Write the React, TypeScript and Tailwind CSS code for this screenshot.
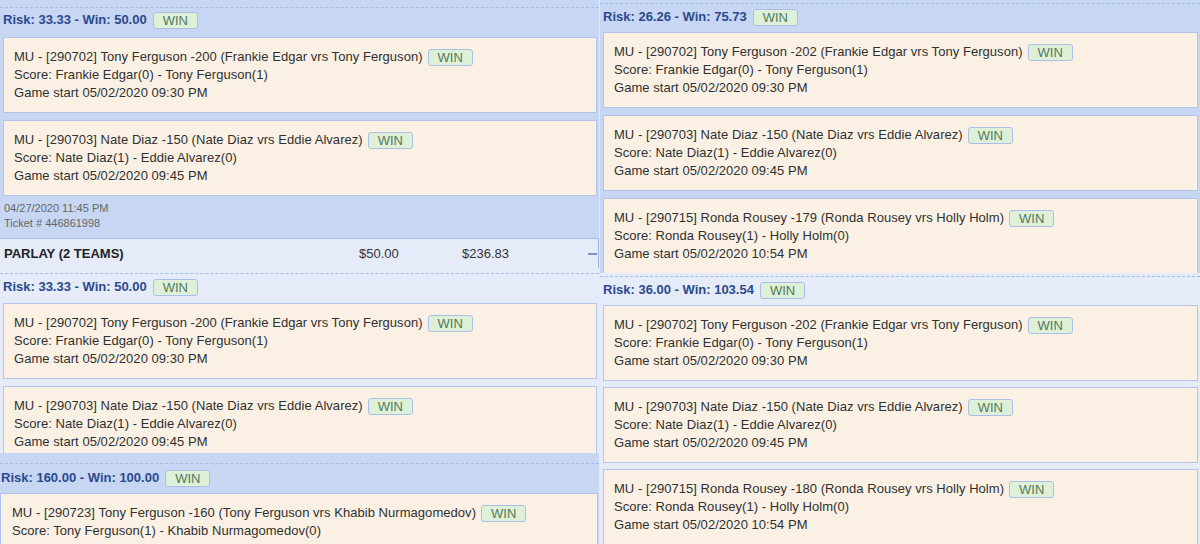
import React from "react";

type LegData = { line: string; score: string; start?: string };

function Badge({ className = "" }: { className?: string }) {
  return (
    <span
      className={
        "inline-flex items-center h-[17px] border border-[#a9bfe8] bg-[#dff0d8] text-[#52795a] rounded-[3px] px-[9px] text-[13px] leading-[15px] font-normal tracking-normal " +
        className
      }
    >
      WIN
    </span>
  );
}

function RiskHeader({ risk, win, className = "" }: { risk: string; win: string; className?: string }) {
  return (
    <div className={"flex items-center h-[18px] text-[13px] leading-[18px] font-bold text-[#2b4a8e] " + className}>
      <span>
        Risk: {risk} - Win: {win}
      </span>
      <Badge className="ml-[6px]" />
    </div>
  );
}

function Leg({ data, className = "" }: { data: LegData; className?: string }) {
  return (
    <div
      className={
        "border border-[#b3c5eb] bg-[#faf1e4] pl-[10px] py-[10px] text-[13px] leading-[18px] text-[#303030] tracking-[0.045px] " +
        className
      }
    >
      <div className="flex items-center h-[18px] whitespace-nowrap">
        <span>{data.line}</span>
        <Badge className="ml-[5px]" />
      </div>
      <div className="whitespace-nowrap">{data.score}</div>
      {data.start && <div className="whitespace-nowrap">{data.start}</div>}
    </div>
  );
}

const ferg200: LegData = {
  line: "MU - [290702] Tony Ferguson -200 (Frankie Edgar vrs Tony Ferguson)",
  score: "Score: Frankie Edgar(0) - Tony Ferguson(1)",
  start: "Game start 05/02/2020 09:30 PM",
};
const ferg202: LegData = {
  line: "MU - [290702] Tony Ferguson -202 (Frankie Edgar vrs Tony Ferguson)",
  score: "Score: Frankie Edgar(0) - Tony Ferguson(1)",
  start: "Game start 05/02/2020 09:30 PM",
};
const diaz: LegData = {
  line: "MU - [290703] Nate Diaz -150 (Nate Diaz vrs Eddie Alvarez)",
  score: "Score: Nate Diaz(1) - Eddie Alvarez(0)",
  start: "Game start 05/02/2020 09:45 PM",
};
const rousey179: LegData = {
  line: "MU - [290715] Ronda Rousey -179 (Ronda Rousey vrs Holly Holm)",
  score: "Score: Ronda Rousey(1) - Holly Holm(0)",
  start: "Game start 05/02/2020 10:54 PM",
};
const rousey180: LegData = {
  line: "MU - [290715] Ronda Rousey -180 (Ronda Rousey vrs Holly Holm)",
  score: "Score: Ronda Rousey(1) - Holly Holm(0)",
  start: "Game start 05/02/2020 10:54 PM",
};
const khabib: LegData = {
  line: "MU - [290723] Tony Ferguson -160 (Tony Ferguson vrs Khabib Nurmagomedov)",
  score: "Score: Tony Ferguson(1) - Khabib Nurmagomedov(0)",
};

function Dashed() {
  return <div className="border-t border-dashed border-[#a6bbe7]" />;
}

export default function App() {
  return (
    <div
      className="w-[1200px] h-[544px] overflow-hidden flex bg-[#c7d6f2]"
      style={{ fontFamily: '"Liberation Sans", Arial, sans-serif' }}
    >
      {/* Left column */}
      <div className="w-[599px] flex flex-col shrink-0">
        <div className="bg-[#c7d6f2] pt-[7px]">
          <Dashed />
          <RiskHeader risk="33.33" win="50.00" className="pl-[3px] mt-[3px] mb-[8px]" />
          <div className="flex flex-col gap-[7px] ml-[3px] mr-[2px]">
            <Leg data={ferg200} />
            <Leg data={diaz} />
          </div>
          <div className="pl-[4px] pt-[5px] pb-[7px] text-[11px] leading-[15px] text-[#666]">
            <div>04/27/2020 11:45 PM</div>
            <div>Ticket # 446861998</div>
          </div>
        </div>
        <div className="bg-[#e5ebf8] border-t border-[#aabfe8] border-r border-r-[#9fb4e0] h-[30px] flex items-center text-[13px] text-[#333]">
          <div className="w-[359px] pl-[4px] font-bold text-[#222]">PARLAY (2 TEAMS)</div>
          <div className="w-[103px]">$50.00</div>
          <div className="flex-1">$236.83</div>
          <div className="w-[9px] h-[2px] bg-[#7b92c8] mr-[1px]" />
        </div>
        <div className="bg-[#e5ebf8] pt-[5px] h-[185px] overflow-hidden">
          <Dashed />
          <RiskHeader risk="33.33" win="50.00" className="pl-[3px] mt-[4px] mb-[7px]" />
          <div className="flex flex-col gap-[7px] ml-[3px] mr-[2px]">
            <Leg data={ferg200} />
            <Leg data={diaz} />
          </div>
        </div>
        <div className="bg-[#c7d6f2] pt-[10px] flex-1 overflow-hidden">
          <Dashed />
          <RiskHeader risk="160.00" win="100.00" className="pl-[1px] mt-[5px] mb-[6px]" />
          <div className="flex flex-col ml-0 mr-[1px]">
            <Leg data={khabib} className="pl-[11px]" />
          </div>
        </div>
      </div>
      <div className="w-[1px] bg-[#e3eaf9] shrink-0" />
      {/* Right column */}
      <div className="w-[600px] flex flex-col shrink-0">
        <div className="bg-[#c7d6f2] pt-[3px] h-[273px] overflow-hidden">
          <Dashed />
          <RiskHeader risk="26.26" win="75.73" className="pl-[3px] mt-[4px] mb-[6px]" />
          <div className="flex flex-col gap-[7px] ml-[3px] mr-[2px]">
            <Leg data={ferg202} />
            <Leg data={diaz} />
            <Leg data={rousey179} />
          </div>
        </div>
        <div className="bg-[#e5ebf8] pt-[3px] flex-1 overflow-hidden">
          <Dashed />
          <RiskHeader risk="36.00" win="103.54" className="pl-[3px] mt-[4px] mb-[6px]" />
          <div className="flex flex-col gap-[6px] ml-[3px] mr-[2px]">
            <Leg data={ferg202} />
            <Leg data={diaz} />
            <Leg data={rousey180} />
          </div>
        </div>
      </div>
    </div>
  );
}
